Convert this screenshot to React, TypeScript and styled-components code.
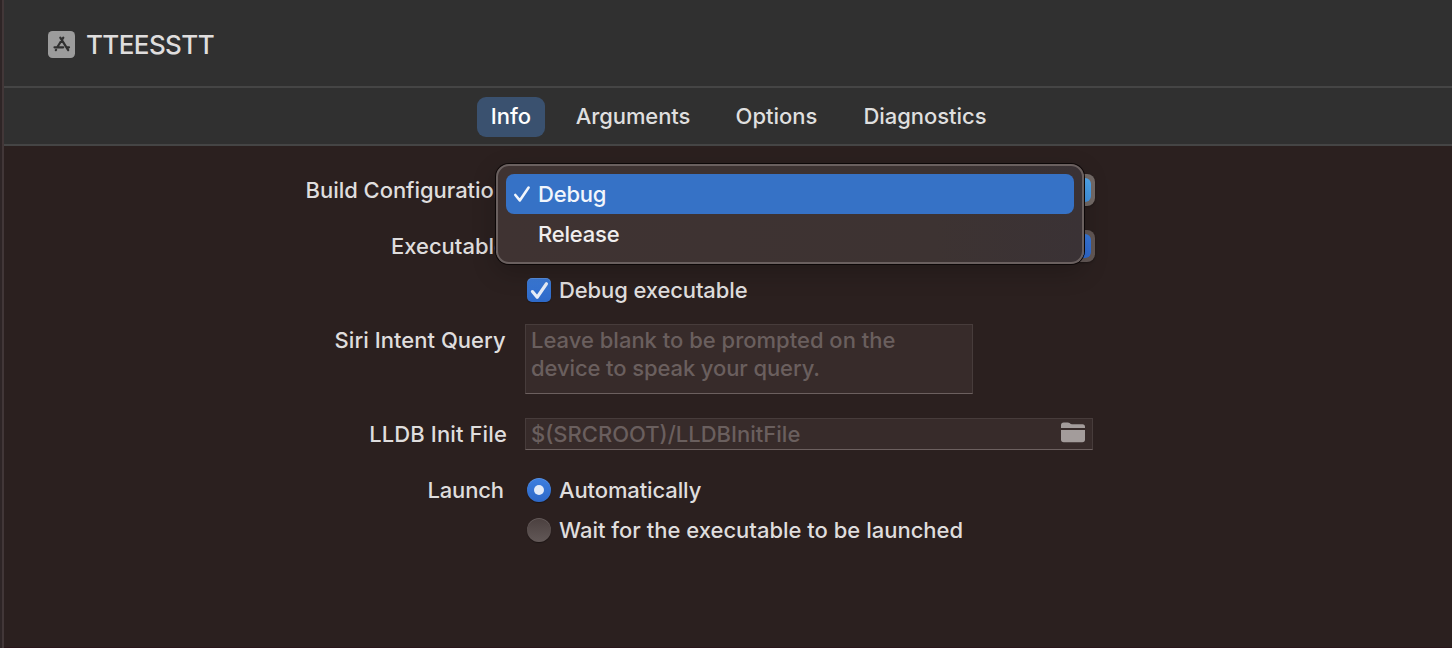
import React from "react";
import styled, { createGlobalStyle, css } from "styled-components";

const GlobalStyle = createGlobalStyle`
  * { box-sizing: border-box; }
  body { margin: 0; background: #2b201f; }
`;

const Window = styled.div`
  display: flex;
  width: 1452px;
  height: 648px;
  overflow: hidden;
  background: #2b201f;
  color: #dfdddd;
  font-family: Inter, "Liberation Sans", sans-serif;
  font-size: 22px;
  font-weight: 450;
  line-height: 28px;
`;

const SplitEdge = styled.div`
  flex: none;
  width: 4px;
  background: #2e2526;
  border-right: 2px solid #423738;
`;

const Main = styled.main`
  flex: 1;
  display: flex;
  flex-direction: column;
  border-bottom: 1px solid #2a161b;
`;

const Header = styled.header`
  display: flex;
  align-items: center;
  gap: 11px;
  height: 88px;
  padding: 2px 0 0 44px;
  background: #303030;
  border-bottom: 2px solid #454545;
`;

const Title = styled.h1<{ $track: number }>`
  margin: 0;
  padding-top: 2px;
  font-size: 26px;
  font-weight: 450;
  line-height: 32px;
  letter-spacing: ${(p) => p.$track}px;
`;

const TabBar = styled.nav`
  display: flex;
  align-items: center;
  gap: 18px;
  height: 58px;
  padding-left: 473px;
  background: #303030;
  border-bottom: 2px solid #454545;
`;

const Tab = styled.button<{ $active?: boolean; $width: number; $track: number }>`
  width: ${(p) => p.$width}px;
  height: 40px;
  padding: 0 0 2px;
  margin-top: 2px;
  border: 0;
  border-radius: 9px;
  background: ${(p) => (p.$active ? "#3a516f" : "transparent")};
  color: ${(p) => (p.$active ? "#ffffff" : "#dfdfdf")};
  font: inherit;
  font-weight: ${(p) => (p.$active ? 500 : 450)};
  letter-spacing: ${(p) => p.$track}px;
  white-space: nowrap;
`;

const Form = styled.form`
  display: flex;
  flex-direction: column;
  padding-top: 28px;
`;

const Row = styled.div<{ $gap?: number }>`
  display: flex;
  align-items: flex-start;
  margin-bottom: ${(p) => p.$gap ?? 0}px;
`;

const Label = styled.label<{ $track: number; $inset: number; $drop?: number }>`
  flex: none;
  width: 521px;
  padding-right: ${(p) => p.$inset}px;
  padding-top: ${(p) => p.$drop ?? 2}px;
  text-align: right;
  white-space: nowrap;
  letter-spacing: ${(p) => p.$track}px;
`;

const Text = styled.span<{ $track: number }>`
  letter-spacing: ${(p) => p.$track}px;
  white-space: nowrap;
`;

const PopupButton = styled.div<{ $bright?: boolean }>`
  position: relative;
  display: flex;
  justify-content: flex-end;
  align-items: center;
  width: 570px;
  height: 32px;
  padding-right: 4px;
  border-radius: 8px;
  background: ${(p) => (p.$bright ? "#746b68" : "#635856")};
  box-shadow: 0 1px 2px rgba(0, 0, 0, 0.3);
`;

const Stepper = styled.span<{ $bright?: boolean }>`
  width: 24px;
  height: 24px;
  border-radius: 6px;
  background: ${(p) =>
    p.$bright
      ? "linear-gradient(#50a8f0, #4397e6)"
      : "linear-gradient(#397add, #2f69cf)"};
`;

const Menu = styled.ul`
  position: absolute;
  z-index: 2;
  left: -29px;
  top: -10px;
  width: 588px;
  height: 100px;
  margin: 0;
  padding: 8px;
  list-style: none;
  border: 2px solid #6a605f;
  border-radius: 13px;
  background: linear-gradient(90deg, #3f3332, #3d3332 75%, #3a3235);
  box-shadow: 0 0 0 1px #0c0707, 0 8px 24px rgba(0, 0, 0, 0.22);
`;

const MenuItem = styled.li<{ $selected?: boolean }>`
  display: flex;
  align-items: center;
  height: 40px;
  border-radius: 8px;
  padding-left: 7px;
  color: #f0eeee;
  font-weight: 500;
  ${(p) =>
    p.$selected &&
    css`
      background: #3672c6;
      color: #f2f6fc;
    `}
`;

const MarkSlot = styled.span`
  display: flex;
  width: 25px;
`;

const Choice = styled.div`
  display: flex;
  align-items: center;
  gap: 8px;
  height: 28px;
  padding-left: 2px;
`;

const CheckBox = styled.span`
  display: grid;
  place-items: center;
  width: 24px;
  height: 24px;
  border-radius: 5px;
  background: linear-gradient(#3b7bd9, #2e69c8);
  box-shadow: 0 1px 1px rgba(0, 0, 0, 0.3), inset 0 1px 0 rgba(255, 255, 255, 0.15);
`;

const Radio = styled.span<{ $on?: boolean }>`
  display: flex;
  align-items: center;
  justify-content: center;
  width: 24px;
  height: 24px;
  border-radius: 50%;
  background: ${(p) =>
    p.$on ? "linear-gradient(#3c7fe0, #2d68c7)" : "linear-gradient(#4b403f, #625857)"};
  box-shadow: 0 1px 1px rgba(0, 0, 0, 0.35), inset 0 1px 0 rgba(255, 255, 255, 0.13);
`;

const Dot = styled.span`
  width: 10px;
  height: 10px;
  border-radius: 50%;
  background: #e2ebf8;
`;

const Field = styled.div<{ $width: number; $height: number }>`
  display: flex;
  justify-content: space-between;
  width: ${(p) => p.$width}px;
  height: ${(p) => p.$height}px;
  padding: 1px 7px 0 5px;
  border: 1px solid #473c3b;
  border-bottom-color: #6c605f;
  background: #372b2a;
  color: #6a5f5e;
`;

const Lines = styled.div`
  display: flex;
  flex-direction: column;
`;

const FolderGlyph = styled.svg`
  margin-top: 2px;
`;

const AppIcon = () => (
  <svg width="27" height="27" viewBox="0 0 27 27">
    <rect width="27" height="27" rx="4.5" fill="#9c9c9c" />
    <g fill="none" stroke="#303030" strokeWidth="2.2" strokeLinecap="round">
      <path d="M12.3 6.6 20.2 19.2M15.3 6.6 9.4 16M8.1 18.8 7.8 19.2M6.5 16.3H15.2M19.2 16.3H21" />
    </g>
  </svg>
);

const CheckMark = ({ size, color, weight }: { size: number; color: string; weight: number }) => (
  <svg width={size} height={size} viewBox="0 0 18 18" fill="none">
    <path
      d="M2.3 10 6.8 15.4 15.6 2.6"
      stroke={color}
      strokeWidth={weight}
      strokeLinecap="round"
      strokeLinejoin="round"
    />
  </svg>
);

const FolderIcon = () => (
  <FolderGlyph width="24" height="21" viewBox="0 0 24 21" fill="#a39c9b">
    <path d="M0 6V3.2C0 1.5 1 .5 2.7 .5H6.5C8.8 .5 9 2.2 11 2.2H21.5C23.2 2.2 24 3.2 24 4.8V6Z" />
    <path d="M0 8H24V17.5C24 19.2 23.1 20.2 21.4 20.2H2.7C1 20.2 0 19.2 0 17.5Z" />
  </FolderGlyph>
);

export default function App() {
  return (
    <>
      <GlobalStyle />
      <Window>
        <SplitEdge />
        <Main>
          <Header>
            <AppIcon />
            <Title $track={-0.6}>TTEESSTT</Title>
          </Header>
          <TabBar>
            <Tab $active $width={68} $track={0}>Info</Tab>
            <Tab $width={140} $track={-0.1}>Arguments</Tab>
            <Tab $width={111} $track={0}>Options</Tab>
            <Tab $width={150} $track={-0.05}>Diagnostics</Tab>
          </TabBar>
          <Form>
            <Row $gap={24}>
              <Label $track={-0.04} $inset={18}>Build Configuration</Label>
              <PopupButton $bright>
                <Stepper $bright />
                <Menu>
                  <MenuItem $selected>
                    <MarkSlot>
                      <CheckMark size={18} color="#f2f6fc" weight={2.6} />
                    </MarkSlot>
                    <Text $track={-0.2}>Debug</Text>
                  </MenuItem>
                  <MenuItem>
                    <MarkSlot />
                    <Text $track={-0.2}>Release</Text>
                  </MenuItem>
                </Menu>
              </PopupButton>
            </Row>
            <Row $gap={14}>
              <Label $track={0} $inset={18}>Executable</Label>
              <PopupButton>
                <Stepper />
              </PopupButton>
            </Row>
            <Row $gap={20}>
              <Label as="span" $track={0} $inset={0} />
              <Choice>
                <CheckBox>
                  <CheckMark size={19} color="#e8eef8" weight={3} />
                </CheckBox>
                <Text $track={-0.12}>Debug executable</Text>
              </Choice>
            </Row>
            <Row $gap={24}>
              <Label $track={0.03} $inset={19.4}>Siri Intent Query</Label>
              <Field $width={448} $height={70}>
                <Lines>
                  <Text $track={0}>Leave blank to be prompted on the</Text>
                  <Text $track={-0.1}>device to speak your query.</Text>
                </Lines>
              </Field>
            </Row>
            <Row $gap={26}>
              <Label $track={0.12} $inset={18}>LLDB Init File</Label>
              <Field $width={568} $height={32}>
                <Text $track={0}>$(SRCROOT)/LLDBInitFile</Text>
                <FolderIcon />
              </Field>
            </Row>
            <Row $gap={12}>
              <Label $track={-0.12} $inset={21} $drop={0}>Launch</Label>
              <Choice>
                <Radio $on>
                  <Dot />
                </Radio>
                <Text $track={-0.12}>Automatically</Text>
              </Choice>
            </Row>
            <Row>
              <Label as="span" $track={0} $inset={0} />
              <Choice>
                <Radio />
                <Text $track={0}>Wait for the executable to be launched</Text>
              </Choice>
            </Row>
          </Form>
        </Main>
      </Window>
    </>
  );
}
